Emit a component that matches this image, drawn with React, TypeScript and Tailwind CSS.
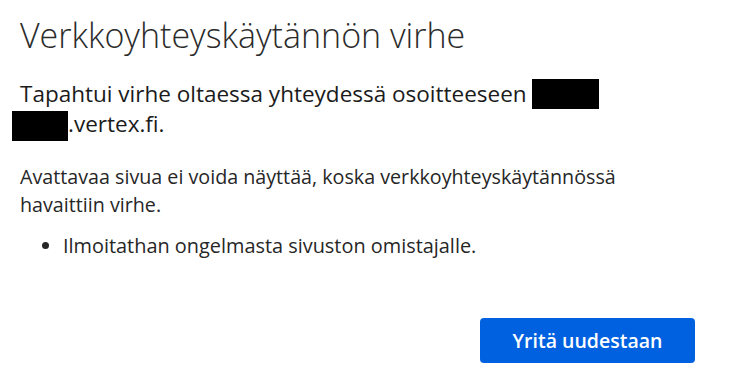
import React from "react";

export default function App() {
  return (
    <div
      className="w-[754px] h-[392px] bg-white overflow-hidden flex flex-col"
      style={{ fontFamily: '"Open Sans", "Noto Sans", sans-serif' }}
    >
      <div className="pl-[20px]">
        <h1 className="pt-[13px] text-[34px] leading-[44px] font-light text-[#2b2b2b]">
          Verkkoyhteyskäytännön virhe
        </h1>
        <p className="mt-[22px] text-[22.5px] leading-[30px] text-[#1b1b1b]">
          Tapahtui virhe oltaessa yhteydessä osoitteeseen{" "}
          <span className="inline-block w-[67px] h-[30px] bg-black align-top" />
          <br />
          <span className="inline-block relative top-[2px] ml-[-8px] w-[56px] h-[30px] bg-black align-top" />
          .vertex.fi.
        </p>
        <p className="mt-[24px] text-[19.7px] leading-[28px] text-[#262626]">
          Avattavaa sivua ei voida näyttää, koska verkkoyhteyskäytännössä
          <br />
          havaittiin virhe.
        </p>
        <ul className="mt-[13px] pl-[43px] list-disc text-[19.9px] leading-[28px] text-[#262626]">
          <li>Ilmoitathan ongelmasta sivuston omistajalle.</li>
        </ul>
      </div>
      <div className="flex justify-end pr-[59px] mt-[58px]">
        <button className="w-[215px] h-[45px] rounded-[4px] bg-[#0061e0] text-white text-[19.5px] font-semibold">
          Yritä uudestaan
        </button>
      </div>
    </div>
  );
}
